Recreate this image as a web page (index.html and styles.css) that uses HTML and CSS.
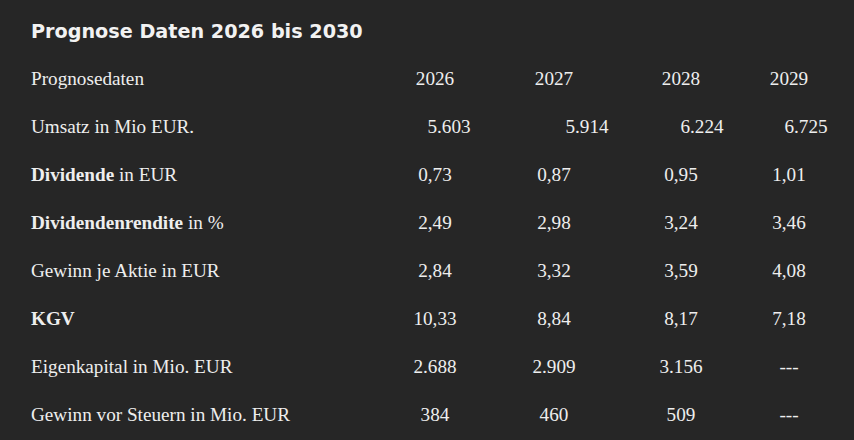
FILE: index.html
```html
<!DOCTYPE html>
<html lang="de">
<head>
<meta charset="utf-8">
<title>Prognose Daten 2026 bis 2030</title>
<link rel="stylesheet" href="styles.css">
</head>
<body>
<section class="panel">
  <h2 class="title">Prognose Daten 2026 bis 2030</h2>
  <table class="data">
    <colgroup>
      <col class="c-label"><col class="c-2026"><col class="c-2027"><col class="c-2028"><col class="c-2029">
    </colgroup>
    <tbody>
      <tr><td>Prognosedaten</td><td>2026</td><td>2027</td><td>2028</td><td>2029</td></tr>
      <tr><td>Umsatz in Mio EUR.</td><td><span class="sh1">5.603</span></td><td><span class="sh2">5.914</span></td><td><span class="sh3">6.224</span></td><td><span class="sh4">6.725</span></td></tr>
      <tr><td><b>Dividende</b> in EUR</td><td>0,73</td><td>0,87</td><td>0,95</td><td>1,01</td></tr>
      <tr><td><b>Dividendenrendite</b> in %</td><td>2,49</td><td>2,98</td><td>3,24</td><td>3,46</td></tr>
      <tr><td>Gewinn je Aktie in EUR</td><td>2,84</td><td>3,32</td><td>3,59</td><td>4,08</td></tr>
      <tr><td><b>KGV</b></td><td>10,33</td><td>8,84</td><td>8,17</td><td>7,18</td></tr>
      <tr><td>Eigenkapital in Mio. EUR</td><td>2.688</td><td>2.909</td><td>3.156</td><td>---</td></tr>
      <tr><td>Gewinn vor Steuern in Mio. EUR</td><td>384</td><td>460</td><td>509</td><td>---</td></tr>
    </tbody>
  </table>
</section>
</body>
</html>
```

FILE: styles.css
```css
html, body {
  margin: 0;
  padding: 0;
  background: #262626;
}
body {
  color: #eeeeee;
  font-family: "Liberation Serif", "Times New Roman", serif;
  font-size: 19.2px;
}
.panel {
  padding: 19px 14px 0 31px;
}
.title {
  margin: 0;
  font-family: "DejaVu Sans", sans-serif;
  font-weight: bold;
  font-size: 19.2px;
  line-height: 26px;
  color: #f2f2f2;
}
.data {
  margin-top: 10px;
  border-collapse: collapse;
  table-layout: fixed;
  width: 809px;
}
.c-label { width: 355px; }
.c-2026 { width: 98px; }
.c-2027 { width: 140px; }
.c-2028 { width: 114px; }
.c-2029 { width: 102px; }
.data td {
  padding: 0;
  height: 48px;
  text-align: center;
  vertical-align: middle;
  white-space: nowrap;
}
.data td:first-child {
  text-align: left;
}
.sh1 { padding-left: 28px; }
.sh2 { padding-left: 66px; }
.sh3 { padding-left: 42px; }
.sh4 { padding-left: 34px; }
```
